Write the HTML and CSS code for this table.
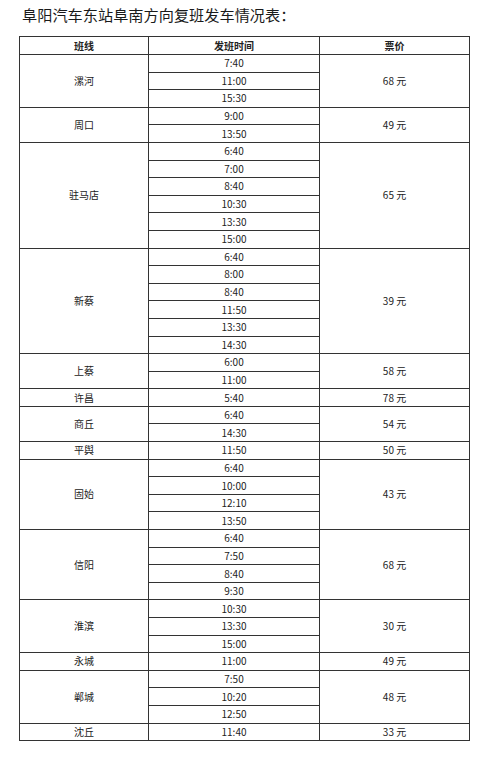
FILE: index.html
```html
<!DOCTYPE html>
<html lang="zh">
<head>
<meta charset="utf-8">
<title>阜阳汽车东站阜南方向复班发车情况表</title>
<link rel="stylesheet" href="styles.css">
</head>
<body>
<h1 class="title">阜阳汽车东站阜南方向复班发车情况表：</h1>
<table class="sched">
  <colgroup><col class="c1"><col class="c2"><col class="c3"></colgroup>
  <thead>
    <tr><th>班线</th><th>发班时间</th><th>票价</th></tr>
  </thead>
  <tbody>
    <tr><td rowspan="3">漯河</td><td>7:40</td><td rowspan="3">68 元</td></tr>
    <tr><td>11:00</td></tr>
    <tr><td>15:30</td></tr>
    <tr><td rowspan="2">周口</td><td>9:00</td><td rowspan="2">49 元</td></tr>
    <tr><td>13:50</td></tr>
    <tr><td rowspan="6">驻马店</td><td>6:40</td><td rowspan="6">65 元</td></tr>
    <tr><td>7:00</td></tr>
    <tr><td>8:40</td></tr>
    <tr><td>10:30</td></tr>
    <tr><td>13:30</td></tr>
    <tr><td>15:00</td></tr>
    <tr><td rowspan="6">新蔡</td><td>6:40</td><td rowspan="6">39 元</td></tr>
    <tr><td>8:00</td></tr>
    <tr><td>8:40</td></tr>
    <tr><td>11:50</td></tr>
    <tr><td>13:30</td></tr>
    <tr><td>14:30</td></tr>
    <tr><td rowspan="2">上蔡</td><td>6:00</td><td rowspan="2">58 元</td></tr>
    <tr><td>11:00</td></tr>
    <tr><td>许昌</td><td>5:40</td><td>78 元</td></tr>
    <tr><td rowspan="2">商丘</td><td>6:40</td><td rowspan="2">54 元</td></tr>
    <tr><td>14:30</td></tr>
    <tr><td>平舆</td><td>11:50</td><td>50 元</td></tr>
    <tr><td rowspan="4">固始</td><td>6:40</td><td rowspan="4">43 元</td></tr>
    <tr><td>10:00</td></tr>
    <tr><td>12:10</td></tr>
    <tr><td>13:50</td></tr>
    <tr><td rowspan="4">信阳</td><td>6:40</td><td rowspan="4">68 元</td></tr>
    <tr><td>7:50</td></tr>
    <tr><td>8:40</td></tr>
    <tr><td>9:30</td></tr>
    <tr><td rowspan="3">淮滨</td><td>10:30</td><td rowspan="3">30 元</td></tr>
    <tr><td>13:30</td></tr>
    <tr><td>15:00</td></tr>
    <tr><td>永城</td><td>11:00</td><td>49 元</td></tr>
    <tr><td rowspan="3">郸城</td><td>7:50</td><td rowspan="3">48 元</td></tr>
    <tr><td>10:20</td></tr>
    <tr><td>12:50</td></tr>
    <tr><td>沈丘</td><td>11:40</td><td>33 元</td></tr>
  </tbody>
</table>
</body>
</html>
```
FILE: styles.css
```css
html, body {
  margin: 0;
  padding: 0;
  background: #ffffff;
}
body {
  padding: 4px 0 0 19px;
  font-family: "Noto Sans CJK SC", "Noto Sans", sans-serif;
  color: #222;
}
.title {
  margin: 0;
  font-size: 15.2px;
  font-weight: normal;
  line-height: 20px;
  padding-left: 3px;
  color: #1a1a1a;
  letter-spacing: 0;
}
.sched {
  margin-top: 12px;
  border-collapse: collapse;
  border: 1.4px solid #000;
  table-layout: fixed;
  width: 450px;
  font-size: 10px;
  color: #222;
}
.c1 { width: 129px; }
.c2 { width: 171px; }
.c3 { width: 150px; }
.sched th,
.sched td {
  border: 1px solid #333;
  padding: 0;
  height: 16.6px;
  line-height: 12px;
  text-align: center;
  vertical-align: middle;
}
.sched th {
  font-weight: bold;
  height: 17px;
}
```
